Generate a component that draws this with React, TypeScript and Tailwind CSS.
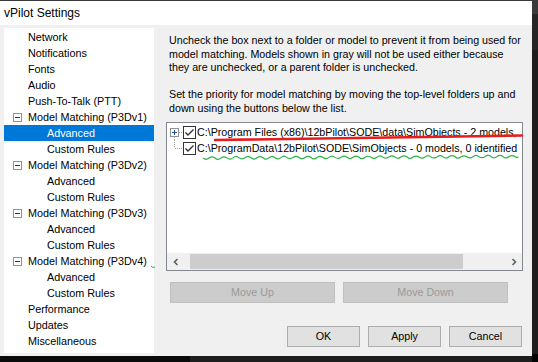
import React from "react";

const font = { fontFamily: '"Liberation Sans", Arial, sans-serif' };

type TreeItem = { label: string; level: 0 | 1; group?: boolean; selected?: boolean };

const tree: TreeItem[] = [
  { label: "Network", level: 0 },
  { label: "Notifications", level: 0 },
  { label: "Fonts", level: 0 },
  { label: "Audio", level: 0 },
  { label: "Push-To-Talk (PTT)", level: 0 },
  { label: "Model Matching (P3Dv1)", level: 0, group: true },
  { label: "Advanced", level: 1, selected: true },
  { label: "Custom Rules", level: 1 },
  { label: "Model Matching (P3Dv2)", level: 0, group: true },
  { label: "Advanced", level: 1 },
  { label: "Custom Rules", level: 1 },
  { label: "Model Matching (P3Dv3)", level: 0, group: true },
  { label: "Advanced", level: 1 },
  { label: "Custom Rules", level: 1 },
  { label: "Model Matching (P3Dv4)", level: 0, group: true },
  { label: "Advanced", level: 1 },
  { label: "Custom Rules", level: 1 },
  { label: "Performance", level: 0 },
  { label: "Updates", level: 0 },
  { label: "Miscellaneous", level: 0 },
];

function MinusBox() {
  return (
    <svg width="9" height="9" viewBox="0 0 9 9" className="shrink-0">
      <rect x="0.5" y="0.5" width="8" height="8" fill="#fff" stroke="#919191" />
      <line x1="2" y1="4.5" x2="7" y2="4.5" stroke="#333" />
    </svg>
  );
}

function CheckBox() {
  return (
    <svg width="13" height="13" viewBox="0 0 13 13" className="shrink-0">
      <rect x="0.5" y="0.5" width="12" height="12" fill="#fff" stroke="#333" />
      <polyline points="2.5,6.5 5,9 10.5,3.5" fill="none" stroke="#333" strokeWidth="1.4" />
    </svg>
  );
}

function Expander({ first }: { first: boolean }) {
  return (
    <svg width="16" height="16" viewBox="0 0 16 16" className="shrink-0">
      {first ? (
        <>
          <line x1="12" y1="8.5" x2="16" y2="8.5" stroke="#a0a0a0" strokeDasharray="1 1" />
          <line x1="7.5" y1="13" x2="7.5" y2="16" stroke="#a0a0a0" strokeDasharray="1 1" />
          <rect x="3.5" y="4.5" width="8" height="8" fill="#fff" stroke="#919191" />
          <line x1="5" y1="8.5" x2="10" y2="8.5" stroke="#1f4e9c" />
          <line x1="7.5" y1="6" x2="7.5" y2="11" stroke="#1f4e9c" />
        </>
      ) : (
        <>
          <line x1="7.5" y1="0" x2="7.5" y2="8" stroke="#a0a0a0" strokeDasharray="1 1" />
          <line x1="8" y1="8.5" x2="16" y2="8.5" stroke="#a0a0a0" strokeDasharray="1 1" />
        </>
      )}
    </svg>
  );
}

function wavePath() {
  let d = "M203 158";
  const amps = [1.6, -1.4, 1.8, -1.2, 1.5, -1.7, 1.3, -1.5];
  let x = 203;
  let i = 0;
  while (x < 518) {
    const nx = Math.min(x + 6, 518);
    const base = 158 - ((nx - 203) / 315) * 1.5;
    const a = amps[i % amps.length];
    d += ` Q ${x + 3} ${base + a * 1.6} ${nx} ${base}`;
    x = nx;
    i++;
  }
  return d;
}

export default function App() {
  return (
    <div className="relative w-[538px] h-[362px] bg-[#1b1b1b] flex overflow-hidden" style={font}>
      <div className="flex flex-col">
        <div className="w-[532px] h-[356px] flex flex-col bg-[#f0f0f0]">
          <div className="h-[25px] bg-white border-t border-[#3a3a3a] flex items-center pl-[4px] text-[12px] text-black">
            vPilot Settings
          </div>
          <div className="flex flex-1">
            <div className="ml-[4px] mt-[3px] mb-[3px] w-[150px] bg-white pt-[1px] text-[10.8px] text-black">
              {tree.map((t, i) => (
                <div
                  key={i}
                  className={
                    "h-[16px] flex items-center " +
                    (t.selected ? "bg-[#0078d7] text-white" : "")
                  }
                >
                  {t.level === 0 ? (
                    <div className="w-[24px] pl-[9px] flex items-center">
                      {t.group ? <MinusBox /> : null}
                    </div>
                  ) : (
                    <div className="w-[43px]" />
                  )}
                  <span className="whitespace-nowrap">{t.label}</span>
                </div>
              ))}
            </div>
            <div className="flex-1 flex flex-col pl-[12px] pt-[9px] text-[10.7px] text-black">
              <p className="pl-[3px] leading-[13.5px] whitespace-nowrap">
                Uncheck the box next to a folder or model to prevent it from being used for
                <br />
                model matching. Models shown in gray will not be used either because
                <br />
                they are unchecked, or a parent folder is unchecked.
              </p>
              <p className="pl-[3px] mt-[13.5px] leading-[13.5px] whitespace-nowrap">
                Set the priority for model matching by moving the top-level folders up and
                <br />
                down using the buttons below the list.
              </p>
              <div className="mt-[7px] w-[357px] h-[149px] border border-[#828790] bg-white flex flex-col">
                <div className="flex-1 pt-[1px] overflow-hidden">
                  <div className="h-[16px] flex items-center whitespace-nowrap">
                    <Expander first />
                    <CheckBox />
                    <span className="ml-[1px]">
                      C:\Program Files (x86)\12bPilot\SODE\data\SimObjects - 2 models,
                    </span>
                  </div>
                  <div className="h-[16px] flex items-center whitespace-nowrap">
                    <Expander first={false} />
                    <CheckBox />
                    <span className="ml-[1px]">
                      C:\ProgramData\12bPilot\SODE\SimObjects - 0 models, 0 identified
                    </span>
                  </div>
                </div>
                <div className="h-[17px] bg-[#f0f0f0] flex items-center">
                  <div className="w-[17px] h-[17px] flex items-center justify-center">
                    <svg width="8" height="8" viewBox="0 0 8 8">
                      <polyline points="5.5,1 2.5,4 5.5,7" fill="none" stroke="#606060" strokeWidth="1.6" />
                    </svg>
                  </div>
                  <div className="ml-[6px] w-[273px] h-[15px] bg-[#cdcdcd]" />
                  <div className="flex-1" />
                  <div className="w-[17px] h-[17px] flex items-center justify-center">
                    <svg width="8" height="8" viewBox="0 0 8 8">
                      <polyline points="2.5,1 5.5,4 2.5,7" fill="none" stroke="#606060" strokeWidth="1.6" />
                    </svg>
                  </div>
                </div>
              </div>
              <div className="mt-[11px] ml-[4px] flex gap-[8px]">
                <div className="w-[165px] h-[21px] bg-[#cccccc] border border-[#bfbfbf] text-[#9a9a9a] flex items-center justify-center">
                  Move Up
                </div>
                <div className="w-[165px] h-[21px] bg-[#cccccc] border border-[#bfbfbf] text-[#9a9a9a] flex items-center justify-center">
                  Move Down
                </div>
              </div>
              <div className="mt-[23px] pr-[10px] flex justify-end gap-[8px]">
                <div className="w-[73px] h-[21px] bg-[#e1e1e1] border border-[#adadad] flex items-center justify-center">
                  OK
                </div>
                <div className="w-[73px] h-[21px] bg-[#e1e1e1] border border-[#adadad] flex items-center justify-center">
                  Apply
                </div>
                <div className="w-[73px] h-[21px] bg-[#e1e1e1] border border-[#adadad] flex items-center justify-center">
                  Cancel
                </div>
              </div>
            </div>
          </div>
        </div>
        <div className="flex-1 flex">
          <div className="w-[190px] bg-[#0a0a0a]" />
          <div className="flex-1 bg-[#1e1e1e]" />
        </div>
      </div>
      <div className="flex-1 flex flex-col">
        <div className="h-[14px] bg-[#3a3a3a]" />
        <div className="h-[36px] bg-[#262626]" />
        <div className="flex-1 bg-[#1e1e1e]" />
        <div className="h-[8px] bg-[#050505]" />
      </div>
      <svg className="absolute inset-0 pointer-events-none" width="538" height="362" viewBox="0 0 538 362">
        <path d="M215 140 Q 370 137.5 522 135.5" fill="none" stroke="#e81c1c" strokeWidth="2.6" strokeLinecap="round" />
        <path d={wavePath()} fill="none" stroke="#2fb14a" strokeWidth="1.2" />
        <path d="M151 266 Q 153 268.5 155 267" fill="none" stroke="#2fb14a" strokeWidth="1" />
      </svg>
    </div>
  );
}
